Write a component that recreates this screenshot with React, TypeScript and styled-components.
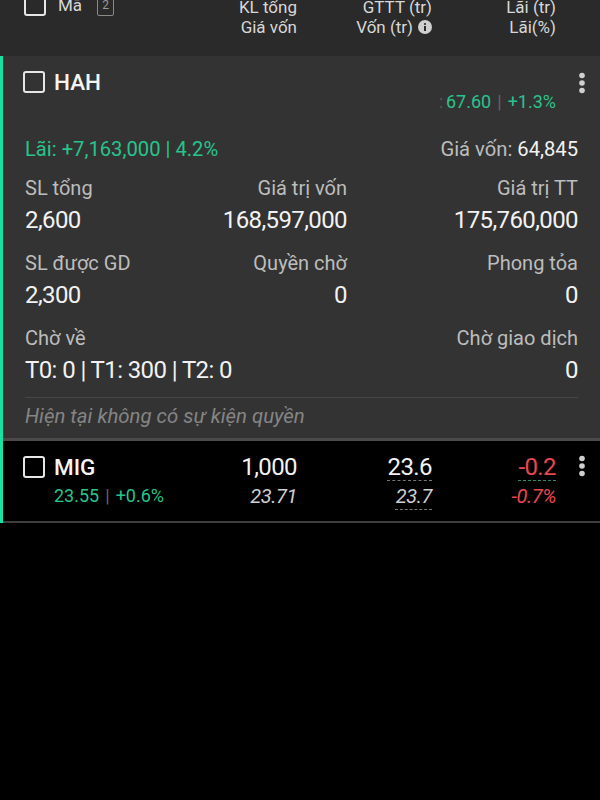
import React from "react";
import styled, { createGlobalStyle } from "styled-components";

const GREEN = "#27c48c";
const BAR = "#17e3a6";
const RED = "#e8474d";

const Global = createGlobalStyle`
  html, body { margin: 0; padding: 0; background: #000; }
  body { font-family: Roboto, "Noto Sans", "Liberation Sans", sans-serif; color: #eee; }
  * { box-sizing: border-box; }
`;

const Page = styled.div`
  width: 600px;
  min-height: 800px;
  background: #000;
`;

const Header = styled.div`
  height: 56px;
  background: #2a2a2a;
  overflow: hidden;
`;

const Cols = styled.div`
  display: grid;
  grid-template-columns: 154px 120px 135px 124px 1fr;
`;

const HeaderGrid = styled(Cols)`
  padding-left: 24px;
  margin-top: -3px;
  grid-template-columns: 153px 120px 135px 124px 1fr;
  font-size: 17px;
  line-height: 20px;
  color: #d8d8d8;
`;

const HeadCell = styled.div`
  text-align: right;
  display: flex;
  flex-direction: column;
  align-items: flex-end;
`;

const HeadLine = styled.span`
  display: inline-flex;
  align-items: center;
  gap: 5px;
  height: 20px;
`;

const NameHead = styled.div`
  display: flex;
  align-items: flex-start;
  margin-top: -3px;
`;

const Check = styled.span`
  display: inline-block;
  flex: none;
  width: 22px;
  height: 22px;
  border: 2.5px solid #e6e6e6;
  border-radius: 3px;
`;

const HeadLabel = styled.span`
  margin-left: 12px;
  margin-top: 1px;
  line-height: 20px;
`;

const Badge = styled.span`
  margin-left: 15px;
  margin-top: 1px;
  width: 17px;
  height: 21px;
  border: 1px solid #8a8a8a;
  border-radius: 2px;
  color: #9a9a9a;
  font-size: 12px;
  line-height: 19px;
  text-align: center;
`;

const Group = styled.div`
  border-left: 3px solid ${BAR};
`;

const Card = styled.div`
  background: #333333;
  padding-bottom: 10px;
`;

const TopRow = styled.div`
  display: grid;
  grid-template-columns: 1fr 44px;
  padding-left: 20px;
`;

const NameLine = styled.div`
  display: flex;
  align-items: center;
  gap: 9px;
  height: 24px;
`;

const Ticker = styled.span`
  font-size: 22.5px;
  font-weight: 500;
  color: #f4f4f4;
  line-height: 24px;
`;

const CardName = styled(NameLine)`
  margin-top: 14px;
`;

const PriceLine = styled.div`
  font-size: 18px;
  line-height: 20px;
  color: ${GREEN};
  text-align: right;
`;

const CardPrice = styled(PriceLine)`
  margin-top: -2px;
`;

const Sep = styled.span`
  color: #666;
  margin: 0 6px;
`;

const Faint = styled.span`
  color: #555;
  margin-right: 3px;
`;

const KebabWrap = styled.div<{ $top: number }>`
  padding-top: ${(p) => p.$top}px;
  padding-left: 22px;
`;

const Kebab = ({ top }: { top: number }) => (
  <KebabWrap $top={top}>
    <svg width="8" height="22" viewBox="0 0 8 22">
      <circle cx="4" cy="3.5" r="2.8" fill="#d0d0d0" />
      <circle cx="4" cy="11" r="2.8" fill="#d0d0d0" />
      <circle cx="4" cy="18.5" r="2.8" fill="#d0d0d0" />
    </svg>
  </KebabWrap>
);

const Body = styled.div`
  padding: 0 22px 0 22px;
`;

const ProfitLine = styled.div`
  display: flex;
  justify-content: space-between;
  align-items: center;
  margin-top: 25px;
  line-height: 24px;
  font-size: 20.2px;
`;

const Green = styled.span`
  color: ${GREEN};
`;

const Muted = styled.span`
  color: #bdbdbd;
`;

const White = styled.span`
  color: #f2f2f2;
`;

const StatGrid = styled.div`
  display: grid;
  grid-template-columns: 150px 172px 1fr;
  row-gap: 15px;
  margin-top: 15px;
`;

const Stat = styled.div<{ $align?: "left" | "right" }>`
  display: flex;
  flex-direction: column;
  align-items: ${(p) => (p.$align === "right" ? "flex-end" : "flex-start")};
  white-space: nowrap;
`;

const Label = styled.span`
  font-size: 20px;
  line-height: 24px;
  color: #bdbdbd;
`;

const Value = styled.span`
  margin-top: 4px;
  font-size: 24px;
  letter-spacing: -0.6px;
  line-height: 32px;
  color: #f2f2f2;
`;

const Divider = styled.div`
  height: 1px;
  background: #464646;
  margin-top: 11px;
`;

const Note = styled.div`
  margin-top: 6px;
  font-size: 20.4px;
  line-height: 24px;
  font-style: italic;
  color: #858585;
`;

const Row = styled.div`
  background: #000;
  border-top: 3px solid #4a4a4a;
  border-bottom: 2px solid #3e3e3e;
  padding: 14px 0 13px 20px;
`;

const RowGrid = styled(Cols)``;

const Cell = styled.div`
  display: flex;
  flex-direction: column;
  align-items: flex-end;
  gap: 5px;
`;

const NameCell = styled.div`
  display: flex;
  flex-direction: column;
  gap: 5px;
`;

const Main = styled.span<{ $color?: string; $dash?: string }>`
  font-size: 24px;
  letter-spacing: -0.6px;
  line-height: 24px;
  color: ${(p) => p.$color ?? "#f2f2f2"};
  ${(p) =>
    p.$dash
      ? `text-decoration: underline dashed ${p.$dash}; text-decoration-thickness: 1px; text-underline-offset: 5px;`
      : ""}
`;

const Sub = styled.span<{ $color?: string; $dash?: string }>`
  font-size: 20px;
  letter-spacing: -0.4px;
  line-height: 24px;
  font-style: italic;
  color: ${(p) => p.$color ?? "#cfcfcf"};
  ${(p) =>
    p.$dash
      ? `text-decoration: underline dashed ${p.$dash}; text-decoration-thickness: 1px; text-underline-offset: 6px;`
      : ""}
`;

const SubPrice = styled(PriceLine)`
  text-align: left;
  padding-left: 31px;
  line-height: 24px;
`;

const InfoIcon = () => (
  <svg width="14" height="14" viewBox="0 0 14 14">
    <circle cx="7" cy="7" r="7" fill="#cfcfcf" />
    <rect x="6" y="6" width="2" height="5" fill="#2a2a2a" />
    <circle cx="7" cy="4" r="1.1" fill="#2a2a2a" />
  </svg>
);

export default function App() {
  return (
    <Page>
      <Global />
      <Header>
        <HeaderGrid>
          <NameHead>
            <Check />
            <HeadLabel>Mã</HeadLabel>
            <Badge>2</Badge>
          </NameHead>
          <HeadCell>
            <HeadLine>KL tổng</HeadLine>
            <HeadLine>Giá vốn</HeadLine>
          </HeadCell>
          <HeadCell>
            <HeadLine>GTTT (tr)</HeadLine>
            <HeadLine>
              Vốn (tr) <InfoIcon />
            </HeadLine>
          </HeadCell>
          <HeadCell>
            <HeadLine>Lãi (tr)</HeadLine>
            <HeadLine>Lãi(%)</HeadLine>
          </HeadCell>
        </HeaderGrid>
      </Header>

      <Group>
        <Card>
          <TopRow>
            <div>
              <CardName>
                <Check />
                <Ticker>HAH</Ticker>
              </CardName>
              <CardPrice>
                <Faint>:</Faint>67.60<Sep>|</Sep>+1.3%
              </CardPrice>
            </div>
            <Kebab top={16} />
          </TopRow>
          <Body>
            <ProfitLine>
              <Green>Lãi: +7,163,000 | 4.2%</Green>
              <span>
                <Muted>Giá vốn: </Muted>
                <White>64,845</White>
              </span>
            </ProfitLine>
            <StatGrid>
              <Stat>
                <Label>SL tổng</Label>
                <Value>2,600</Value>
              </Stat>
              <Stat $align="right">
                <Label>Giá trị vốn</Label>
                <Value>168,597,000</Value>
              </Stat>
              <Stat $align="right">
                <Label>Giá trị TT</Label>
                <Value>175,760,000</Value>
              </Stat>
              <Stat>
                <Label>SL được GD</Label>
                <Value>2,300</Value>
              </Stat>
              <Stat $align="right">
                <Label>Quyền chờ</Label>
                <Value>0</Value>
              </Stat>
              <Stat $align="right">
                <Label>Phong tỏa</Label>
                <Value>0</Value>
              </Stat>
              <Stat>
                <Label>Chờ về</Label>
                <Value>T0: 0 | T1: 300 | T2: 0</Value>
              </Stat>
              <div />
              <Stat $align="right">
                <Label>Chờ giao dịch</Label>
                <Value>0</Value>
              </Stat>
            </StatGrid>
            <Divider />
            <Note>Hiện tại không có sự kiện quyền</Note>
          </Body>
        </Card>

        <Row>
          <RowGrid>
            <NameCell>
              <NameLine>
                <Check />
                <Ticker>MIG</Ticker>
              </NameLine>
              <SubPrice>
                23.55<Sep>|</Sep>+0.6%
              </SubPrice>
            </NameCell>
            <Cell>
              <Main>1,000</Main>
              <Sub>23.71</Sub>
            </Cell>
            <Cell>
              <Main $dash="#777">23.6</Main>
              <Sub $dash="#777">23.7</Sub>
            </Cell>
            <Cell>
              <Main $color={RED} $dash="#2a8a66">-0.2</Main>
              <Sub $color={RED}>-0.7%</Sub>
            </Cell>
            <Kebab top={0} />
          </RowGrid>
        </Row>
      </Group>
    </Page>
  );
}
